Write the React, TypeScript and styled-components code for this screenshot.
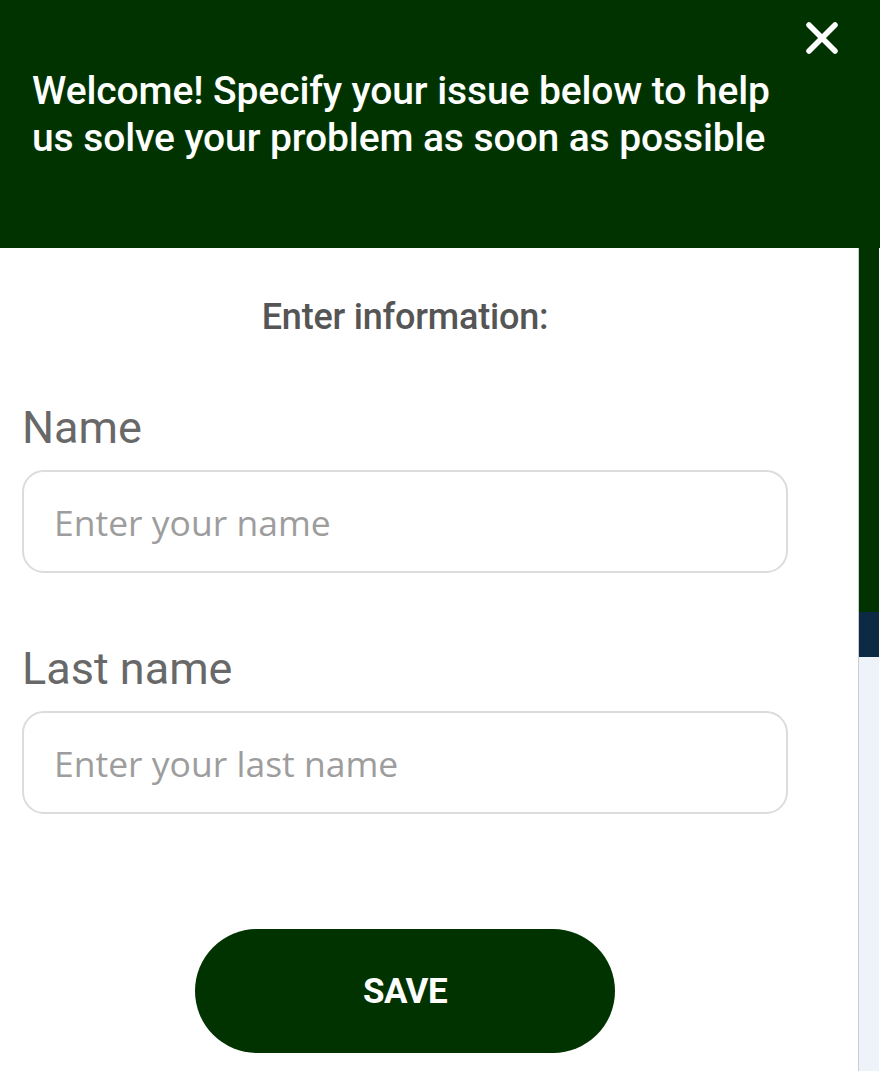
import React from "react";
import styled, { createGlobalStyle } from "styled-components";

const GlobalStyle = createGlobalStyle`
  html, body { margin: 0; padding: 0; background: #ffffff; }
  body { font-family: Roboto, "Liberation Sans", Arial, sans-serif; }
  * { box-sizing: border-box; }
`;

const Page = styled.div`
  width: 880px;
  height: 1071px;
  display: flex;
  flex-direction: column;
  overflow: hidden;
`;

const Header = styled.header`
  position: relative;
  height: 248px;
  flex: none;
  background: #013300;
  padding: 68px 0 0 32px;
`;

const Welcome = styled.p`
  margin: 0;
  max-width: 765px;
  color: #ffffff;
  font-family: Roboto, "Liberation Sans", sans-serif;
  font-weight: 500;
  font-size: 39px;
  line-height: 47px;
  letter-spacing: -0.1px;
`;

const CloseButton = styled.button`
  position: absolute;
  top: 20px;
  right: 40px;
  width: 36px;
  height: 36px;
  padding: 0;
  border: none;
  background: transparent;
  cursor: pointer;
  display: flex;
  align-items: center;
  justify-content: center;
`;

const Body = styled.div`
  flex: 1;
  display: flex;
`;

const Panel = styled.main`
  width: 859px;
  background: #ffffff;
  padding: 49px 0 0 22px;
  border-right: 1px solid #c9ccd0;
`;

const Form = styled.form`
  width: 766px;
  display: flex;
  flex-direction: column;
`;

const Title = styled.h2`
  margin: 0 0 65px;
  text-align: center;
  color: #555555;
  font-family: Roboto, "Liberation Sans", sans-serif;
  font-weight: 500;
  font-size: 36px;
  line-height: 40px;
  letter-spacing: -0.2px;
`;

const Field = styled.div<{ $gap?: number }>`
  display: flex;
  flex-direction: column;
  margin-bottom: ${(p) => p.$gap ?? 0}px;
`;

const Label = styled.label`
  color: #686868;
  font-family: Roboto, "Liberation Sans", sans-serif;
  font-weight: 400;
  font-size: 45px;
  line-height: 52px;
  margin-bottom: 16px;
`;

const Input = styled.input`
  width: 766px;
  height: 103px;
  border: 2px solid #dcdcdc;
  border-radius: 22px;
  padding: 0 30px;
  font-family: "Open Sans", "Liberation Sans", sans-serif;
  font-size: 35.5px;
  color: #444;
  background: #fff;
  outline: none;
  &::placeholder {
    color: #9d9d9d;
  }
`;

const SaveButton = styled.button`
  align-self: center;
  width: 420px;
  height: 124px;
  border: none;
  border-radius: 62px;
  background: #013300;
  color: #ffffff;
  font-family: Roboto, "Liberation Sans", sans-serif;
  font-weight: 700;
  font-size: 35px;
  letter-spacing: -0.5px;
  cursor: pointer;
`;

const Strip = styled.aside`
  width: 20px;
  display: flex;
  flex-direction: column;
`;

const StripPart = styled.div<{ $color: string; $h?: number }>`
  background: ${(p) => p.$color};
  ${(p) => (p.$h ? `height: ${p.$h}px; flex: none;` : "flex: 1;")}
`;

export default function App() {
  return (
    <Page>
      <GlobalStyle />
      <Header>
        <Welcome>
          Welcome! Specify your issue below to help us solve your problem as soon as possible
        </Welcome>
        <CloseButton type="button" aria-label="Close">
          <svg width="34" height="34" viewBox="0 0 34 34" fill="none">
            <path
              d="M4 4 L30 30 M30 4 L4 30"
              stroke="#ffffff"
              strokeWidth="5.5"
              strokeLinecap="round"
            />
          </svg>
        </CloseButton>
      </Header>
      <Body>
        <Panel>
          <Form onSubmit={(e) => e.preventDefault()}>
            <Title>Enter information:</Title>
            <Field $gap={70}>
              <Label htmlFor="name">Name</Label>
              <Input id="name" placeholder="Enter your name" />
            </Field>
            <Field $gap={115}>
              <Label htmlFor="lastname">Last name</Label>
              <Input id="lastname" placeholder="Enter your last name" />
            </Field>
            <SaveButton type="submit">SAVE</SaveButton>
          </Form>
        </Panel>
        <Strip>
          <StripPart $color="#013300" $h={364} />
          <StripPart $color="#0c2a43" $h={45} />
          <StripPart $color="#eef3fa" />
        </Strip>
      </Body>
    </Page>
  );
}
